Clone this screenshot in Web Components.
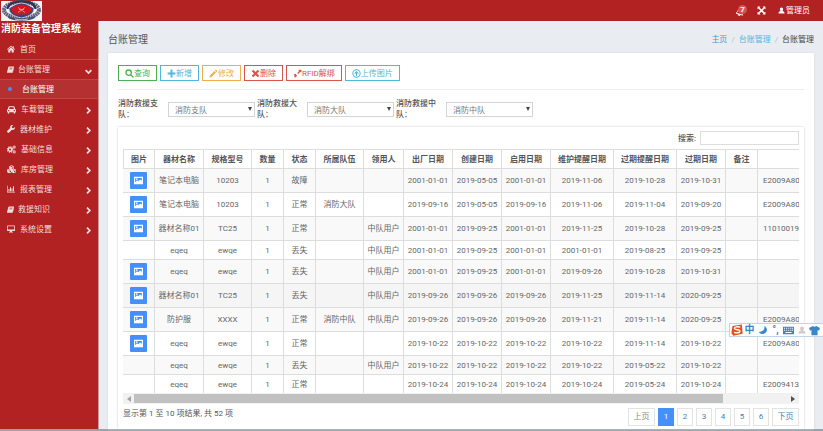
<!DOCTYPE html>
<html lang="zh-CN">
<head>
<meta charset="utf-8">
<meta name="viewport" content="width=device-width, initial-scale=1">
<title>消防装备管理系统</title>
<style>
  body {
    margin: 0;
    background: #e9edf2;
    color: #666;
    font: 8px/11px Roboto, "Noto Sans CJK SC", sans-serif;
  }
</style>
</head>
<body>
<equip-app>
  <top-bar slot="header" user="管理员" count="7"></top-bar>

  <side-nav slot="sidebar" heading="消防装备管理系统">
    <nav-item icon="home">首页</nav-item>
    <nav-item icon="book" arrow="down">台账管理</nav-item>
    <nav-item sub>台账管理</nav-item>
    <nav-item icon="car" arrow="right">车载管理</nav-item>
    <nav-item icon="wrench" arrow="right">器材维护</nav-item>
    <nav-item icon="cogs" arrow="right">基础信息</nav-item>
    <nav-item icon="cubes" arrow="right">库房管理</nav-item>
    <nav-item icon="chart" arrow="right">报表管理</nav-item>
    <nav-item icon="book" arrow="right">救援知识</nav-item>
    <nav-item icon="desktop" arrow="right">系统设置</nav-item>
  </side-nav>

  <page-title heading="台账管理"></page-title>

  <content-card>
    <tool-button slot="tools" icon="search" color="#4caf50">查询</tool-button>
    <tool-button slot="tools" icon="plus" color="#4fb8dc">新增</tool-button>
    <tool-button slot="tools" icon="pencil" color="#f0ad4e">修改</tool-button>
    <tool-button slot="tools" icon="times" color="#d9534f">删除</tool-button>
    <tool-button slot="tools" icon="unlink" color="#d9534f">RFID解绑</tool-button>
    <tool-button slot="tools" icon="upload" color="#4fb8dc">上传图片</tool-button>

    <filter-select slot="filters" label="消防救援支队：" value="消防支队"></filter-select>
    <filter-select slot="filters" label="消防救援大队：" value="消防大队"></filter-select>
    <filter-select slot="filters" label="消防救援中队：" value="消防中队"></filter-select>

    <data-panel>
      <search-box slot="search"></search-box>
      <equip-table></equip-table>
      <span slot="info">显示第 1 至 10 项结果, 共 52 项</span>
      <page-list slot="pages" total="6" current="1"></page-list>
    </data-panel>
  </content-card>
</equip-app>
<ime-bar></ime-bar>

<script>
(function () {
  'use strict';

  // inner markup of every icon, all on a 16 x 16 box
  const ICONS = {
    home: '<path d="M8 1.5 0 8.4l1 1.2L8 3.7l7 5.900 1-1.200-2.500-2.200V2.500h-2v2zM8 5 2.500 9.600V15H6.600v-4h2.800v4h4.100V9.600z"/>',
    book: '<path d="M5 1h10.2c.7 0 1 .6.8 1.2l-3 10.3c-.2.6-.6 1-1.3 1H2.600c-.7 0-.7.9 0 .9h10.200L15.500 5l.5.6-2.600 9.400c-.2.6-.7 1-1.300 1H2.300C.8 16-.2 14.600.2 13.200L3.200 2.500C3.500 1.600 4.100 1 5 1zm1.300 3-.3 1h6.500l.3-1zm-.8 2.500-.3 1h6.500l.3-1z" fill-rule="evenodd"/>',
    car: '<path fill-rule="evenodd" d="M4.200 2h7.600c.8 0 1.400.5 1.600 1.200L14.400 7c1 .2 1.600 1 1.600 2v4h-1.500v1.200a1.300 1.300 0 0 1-2.600 0V13H4.100v1.200a1.300 1.300 0 0 1-2.600 0V13H0V9c0-1 .6-1.800 1.600-2l1-3.800C2.800 2.500 3.400 2 4.200 2zm.3 1.800L3.700 7h8.600l-.8-3.200zM3 8.700a1.300 1.300 0 1 0 0 2.600 1.300 1.300 0 0 0 0-2.600zm10 0a1.300 1.300 0 1 0 0 2.600 1.300 1.300 0 0 0 0-2.600z"/>',
    wrench: '<path d="M15.600 4.200c.8 2.800-.8 5.200-3.400 5.600-.9.100-1.500 0-2.200-.2L4.300 15.200a2 2 0 0 1-2.900 0l-.6-.6a2 2 0 0 1 0-2.900L6.500 6C5.700 3.400 7.300.6 10 .2c.9-.1 1.700 0 2.400.3L9.600 3.200l.5 2.700 2.700.5z"/>',
    cogs: '<g fill="none" stroke="currentColor"><circle cx="5.500" cy="8" r="3.200" stroke-width="2.600"/><circle cx="5.500" cy="8" r="5" stroke-width="1.800" stroke-dasharray="2 1.930"/><circle cx="13" cy="3.800" r="1.600" stroke-width="1.600"/><circle cx="13" cy="12.200" r="1.600" stroke-width="1.600"/><circle cx="13" cy="3.800" r="2.700" stroke-width="1" stroke-dasharray="1.200 .920"/><circle cx="13" cy="12.200" r="2.700" stroke-width="1" stroke-dasharray="1.200 .920"/></g>',
    cubes: '<path fill-rule="evenodd" d="M8 .5 12 2v4.500l3.800 1.700v4.500L12 14.800l-4-2-4 2-3.800-2.100V8.200L4 6.500V2zm0 1.300L5.500 2.700 8 3.700l2.500-1zM8.600 7 11 5.800V4L8.600 5zM4 7.800 1.700 8.700 4 9.700l2.400-1zm8 0-2.400.9 2.400 1 2.300-1zM4.600 13.100 7 11.900V9.900l-2.400 1zm8 0 2.300-1.200v-2l-2.300 1z"/>',
    chart: '<path d="M0 1.500h1.300v12H16V15H0zM3 8h2v4.500H3zm3-3.500h2v8H6zM9 6.500h2v6H9zm3-4h2v10h-2z"/>',
    desktop: '<path fill-rule="evenodd" d="M1.200 1h13.600c.7 0 1.200.5 1.200 1.200v8.600c0 .7-.5 1.200-1.200 1.200H10l.6 2H12v1H4v-1h1.400l.6-2H1.200C.5 12 0 11.500 0 10.800V2.200C0 1.500.5 1 1.200 1zm.3 1.500V9h13V2.500z"/>',
    down: '<path d="m1.500 5 6.500 6.500L14.500 5" fill="none" stroke="currentColor" stroke-width="4"/>',
    right: '<path d="M4.500 1.500 11 8l-6.500 6.500" fill="none" stroke="currentColor" stroke-width="4"/>',
    bell: '<path transform="rotate(18 8 8)" d="M8 1c3.200.4 4.500 2.800 4.500 5.500 0 3 .9 4.600 2.500 6H1c1.600-1.400 2.500-3 2.500-6C3.500 3.800 4.800 1.400 8 1zM6 13.500h4a2 2 0 0 1-4 0z" fill="none" stroke="currentColor" stroke-width="1.600"/>',
    expand: '<path d="M1 1h5L4.500 2.500 8 6l3.500-3.500L10 1h5v5l-1.500-1.500L10 8l3.500 3.500L15 10v5h-5l1.500-1.500L8 10l-3.500 3.500L6 15H1v-5l1.500 1.500L6 8 2.500 4.500 1 6z"/>',
    user: '<path d="M8 1c2.200 0 3.700 1.700 3.700 4 0 1.700-.8 3.200-2 3.900C13 9.300 15 11 15 15H1c0-4 2-5.700 5.300-6.100-1.200-.7-2-2.200-2-3.900 0-2.300 1.500-4 3.700-4z"/>',
    search: '<path d="M6.500 1.700a4.800 4.800 0 1 0 0 9.600 4.800 4.800 0 0 0 0-9.600zM10 10l5 5" fill="none" stroke="currentColor" stroke-width="2.400"/>',
    plus: '<path d="M6.300 1h3.400v5.300H15v3.400H9.700V15H6.300V9.700H1V6.300h5.300z"/>',
    pencil: '<path d="m12.300 1 2.700 2.700-1.800 1.800-2.700-2.700zM9.600 3.700l2.700 2.700L4 14.700 1 15l.3-3z"/>',
    times: '<path d="M4 1.300 8 5.300l4-4L14.700 4l-4 4 4 4-2.700 2.700-4-4-4 4L1.300 12l4-4-4-4z"/>',
    unlink: '<path d="M8.500 2.500 11.500 1l4 1-1 4-1.300-1.300-4 4L7.500 7l4-4-1.500-.2zM1 10l3.500-1.500L7 11l-1.500 3.500L2 15l1-2.500z"/>',
    upload: '<circle cx="8" cy="8" r="6.500" fill="none" stroke="currentColor" stroke-width="1.800"/><path d="m8 3.500 4 4-1.200 1.200-1.900-1.800V12.500H7.100V6.900L5.200 8.700 4 7.500z"/>',
    image: '<path fill-rule="evenodd" d="M0 1.500h16v13H0zM2 3.500v7.500l3.500-3.400 2 1.700L11 6l3 2.500v-5zM5 4.200a1.400 1.400 0 1 1 0 2.800 1.400 1.400 0 0 1 0-2.800z"/>',
    moon: '<path d="M10 1.500c1.500 5-1.500 9-8.500 9.500 2.300 4.500 9.800 4.500 12.200-.5C15.300 7 13.700 3 10 1.500z"/>',
    keyboard: '<path fill-rule="evenodd" d="M0 2.500h16v11H0zM1.500 4v1.500H3V4zm3 0v1.500H6V4zm3 0v1.500H9V4zm3 0v1.500H12V4zm2.500 0v1.500h1.500V4zM1.500 7v1.500H3V7zm3 0v1.500H6V7zm3 0v1.500H9V7zm3 0v1.500H12V7zM13 7v1.500h1.500V7zM3.500 10.300v1.500h9v-1.500z"/>',
    shirt: '<path d="M5.500 1.500c1.300 1.500 3.700 1.500 5 0L16 4.200l-1.500 4-2-.8V15h-9V7.400l-2 .8-1.500-4z"/>'
  };

  const icon = (name, size) =>
    `<svg viewBox="0 0 16 16" width="${size}" height="${size}" fill="currentColor" aria-hidden="true">${ICONS[name]}</svg>`;

  class BaseElement extends HTMLElement {
    constructor() {
      super();
      this.attachShadow({mode: 'open'});
    }

    connectedCallback() {
      this.shadowRoot.innerHTML = this.template;
    }
  }

  customElements.define('equip-app', class extends BaseElement {
    get template() {
      return `
    <style>
      :host {
        display: grid;
        grid-template: auto 1fr / 99px minmax(0, 1fr);
        min-height: 100vh;
        box-sizing: border-box;
        border-bottom: 2px solid #9aa3ac;
      }
      header { grid-column: 1 / -1; }
      aside { display: grid; }
      main {
        display: flex;
        flex-direction: column;
        padding: 0 9px;
      }
    </style>
    <header><slot name="header"></slot></header>
    <aside><slot name="sidebar"></slot></aside>
    <main><slot></slot></main>
    `;
    }
  });

  customElements.define('top-bar', class extends BaseElement {
    get template() {
      return `
    <style>
      :host {
        display: flex;
        align-items: center;
        justify-content: space-between;
        height: 21px;
        background: #b22222;
        color: #fff;
      }
      svg { display: block; }
      .tools {
        display: flex;
        align-items: center;
        gap: 12px;
        padding-right: 13px;
      }
      a {
        display: flex;
        align-items: center;
        gap: 1px;
        color: inherit;
        text-decoration: none;
      }
      .bell {
        position: relative;
        padding: 2px 2px 0 0;
        margin-right: -1px;
      }
      .badge {
        position: absolute;
        top: -1px;
        left: 2px;
        width: 9px;
        height: 9px;
        border-radius: 5px;
        background: #d9534f;
        font: bold 8px/9px Roboto, sans-serif;
        text-align: center;
      }
    </style>
    <svg width="43" height="21" viewBox="0 0 43 21" role="img" aria-label="徽标">
      <rect x="1" y="1" width="41" height="20" fill="#f4f4f6"/>
      <ellipse cx="21.500" cy="10" rx="17.500" ry="8" fill="none" stroke="#5c6178" stroke-width="4" stroke-dasharray="1.800 .500"/>
      <path d="M8 9C8 3 15 1.500 21.500 1.500S35 3 35 9" fill="none" stroke="#2d3455" stroke-width="2.400"/>
      <path d="M9 8c3-1 7-5 12.500-5S31 7 34 8c0 5-3 8-12.500 10C12 16 9 13 9 8z" fill="#34447c" stroke="#d8dbe6" stroke-width=".8"/>
      <path d="M11 8c3-1 5-3.500 10.500-3.500S29 7 32 8c0 3-2 5-4 6.500H15C13 13 11 11 11 8z" fill="#d3161f"/>
      <path d="m18 7.500 7 5m0-5-7 5m1-3h5" stroke="#f3a19b" stroke-width=".8"/>
      <path d="M7 15.500c8 3.500 21 3.500 29 0l-2 3c-7 3-18 3-25 0z" fill="#4a5069"/>
      <path d="M15 19c4 1 9 1 13 0" stroke="#c3c6d0" fill="none"/>
    </svg>
    <div class="tools">
      <a class="bell" href="#" title="消息">${icon('bell', 8)}<span class="badge">${this.getAttribute('count')}</span></a>
      <a href="#" title="全屏">${icon('expand', 9)}</a>
      <a href="#">${icon('user', 7)}${this.getAttribute('user')}</a>
    </div>
    `;
    }
  });

  customElements.define('side-nav', class extends BaseElement {
    get template() {
      return `
    <style>
      :host {
        display: block;
        box-sizing: border-box;
        border-right: 1px solid #cf9a9e;
        background: #b22222;
        box-shadow: inset 0 1px #9c2b2b;
        color: #fff;
      }
      h1 {
        margin: 0;
        padding: 0 0 3px 1px;
        font-size: 10px;
        line-height: 15px;
        white-space: nowrap;
      }
    </style>
    <h1>${this.getAttribute('heading')}</h1>
    <nav><slot></slot></nav>
    `;
    }
  });

  // width of each menu icon; the text starts right after it
  const NAV_ICON_WIDTH = {home: 8, book: 7, car: 9, wrench: 8, cogs: 9, cubes: 9, chart: 8, desktop: 8};

  customElements.define('nav-item', class extends BaseElement {
    get template() {
      const name = this.getAttribute('icon');
      const arrow = this.getAttribute('arrow');
      return `
    <style>
      :host { display: block; }
      a {
        display: flex;
        align-items: center;
        gap: 5px;
        height: 20px;
        padding: 0 6px 0 7px;
        box-sizing: border-box;
        color: #f3dede;
        text-decoration: none;
      }
      :host([icon=book]) a { gap: 4px; }
      :host([arrow=down]) a { border-top: 1px solid #c04a4a; }
      :host([sub]) a {
        gap: 10px;
        border: solid #bd4545;
        border-width: 1px 0;
        background: #b53030;
        color: #fff;
      }
      .text { flex: 1; }
      .dot {
        width: 4px;
        height: 4px;
        margin-left: 1px;
        border-radius: 2px;
        background: #4390fb;
      }
      .arrow { padding-top: 3px; }
      svg { display: block; }
    </style>
    <a href="#">
      ${name ? icon(name, NAV_ICON_WIDTH[name]) : '<span class="dot"></span>'}
      <span class="text"><slot></slot></span>
      ${arrow ? `<span class="arrow">${icon(arrow, 7)}</span>` : ''}
    </a>
    `;
    }
  });

  customElements.define('page-title', class extends BaseElement {
    get template() {
      const heading = this.getAttribute('heading');
      return `
    <style>
      :host {
        display: flex;
        align-items: center;
        justify-content: space-between;
        padding: 11px 0 6px;
      }
      h2 {
        margin: 0;
        color: #555;
        font-size: 10px;
        font-weight: normal;
        line-height: 15px;
      }
      nav { display: flex; gap: 4px; }
      i { color: #bbb; font-style: normal; }
      a { color: #4fb8dc; text-decoration: none; }
      a:first-child { color: #3c9be0; }
      b { color: #444; font-weight: normal; }
    </style>
    <h2>${heading}</h2>
    <nav><a href="#">主页</a><i>/</i><a href="#">${heading}</a><i>/</i><b>${heading}</b></nav>
    `;
    }
  });

  customElements.define('content-card', class extends BaseElement {
    get template() {
      return `
    <style>
      :host {
        flex: 1;
        display: flex;
        flex-direction: column;
        padding: 12px 10px 0;
        background: #fff;
        box-shadow: 0 0 2px #cfd5dc;
      }
      .tools {
        display: flex;
        flex-wrap: wrap;
        gap: 3px;
        padding-bottom: 8px;
        border-bottom: 1px solid #eee;
      }
      .filters {
        display: flex;
        flex-wrap: wrap;
        gap: 2px;
        padding: 8px 0 7px;
      }
    </style>
    <div class="tools"><slot name="tools"></slot></div>
    <div class="filters"><slot name="filters"></slot></div>
    <slot></slot>
    `;
    }
  });

  customElements.define('tool-button', class extends BaseElement {
    get template() {
      return `
    <style>
      :host { display: block; }
      button {
        display: flex;
        align-items: center;
        height: 16px;
        padding: 0 6px;
        border: 1px solid;
        background: #fff;
        color: ${this.getAttribute('color')};
        font: inherit;
        cursor: pointer;
      }
    </style>
    <button type="button">${icon(this.getAttribute('icon'), 9)}<slot></slot></button>
    `;
    }
  });

  customElements.define('filter-select', class extends BaseElement {
    get template() {
      return `
    <style>
      :host {
        display: flex;
        align-items: center;
        gap: 8px;
      }
      label {
        width: 42px;
        color: #555;
        font-weight: 500;
      }
      .box { position: relative; }
      select {
        display: block;
        width: 87px;
        height: 15px;
        padding: 2px 14px 0 6px;
        box-sizing: border-box;
        appearance: none;
        border: 1px solid #d4d4d4;
        border-radius: 0;
        background: #fff;
        color: #777;
        font: inherit;
      }
      .caret {
        position: absolute;
        top: 5px;
        right: 3px;
        border: solid transparent;
        border-width: 4px 2px 0;
        border-top-color: #444;
        pointer-events: none;
      }
    </style>
    <label for="team">${this.getAttribute('label')}</label>
    <div class="box">
      <select id="team"><option>${this.getAttribute('value')}</option></select>
      <span class="caret"></span>
    </div>
    `;
    }
  });

  customElements.define('search-box', class extends BaseElement {
    get template() {
      return `
    <style>
      :host {
        display: flex;
        align-items: center;
        justify-content: flex-end;
        gap: 4px;
      }
      label { color: #555; font-weight: 500; }
      input {
        width: 99px;
        height: 14px;
        padding: 0 4px;
        box-sizing: border-box;
        border: 1px solid #ddd;
        font: inherit;
      }
    </style>
    <label for="q">搜索:</label>
    <input id="q" type="search">
    `;
    }
  });

  customElements.define('data-panel', class extends BaseElement {
    get template() {
      return `
    <style>
      :host {
        flex: 1;
        display: flex;
        flex-direction: column;
        padding: 4px 5px 2px;
        box-shadow: 0 0 2px #c8c8c8;
        clip-path: inset(-2px -2px 0);
      }
      .search { margin-bottom: 4px; }
      .footer {
        display: flex;
        justify-content: space-between;
        padding-top: 4px;
        color: #555;
      }
    </style>
    <div class="search"><slot name="search"></slot></div>
    <slot></slot>
    <div class="footer"><slot name="info"></slot><slot name="pages"></slot></div>
    `;
    }
  });

  const COLUMNS = [
    ['图片', 32], ['器材名称', 49], ['规格型号', 48], ['数量', 32], ['状态', 32],
    ['所属队伍', 48], ['领用人', 40], ['出厂日期', 49], ['创建日期', 49], ['启用日期', 49],
    ['维护提醒日期', 63], ['过期提醒日期', 63], ['过期日期', 49], ['备注', 32], ['', 116]
  ];

  // first field: whether the record has a picture
  const ROWS = [
    [1, '笔记本电脑', '10203', '1', '故障', '', '', '2001-01-01', '2019-05-05', '2001-01-01', '2019-11-06', '2019-10-28', '2019-10-31', '', 'E2009A80'],
    [1, '笔记本电脑', '10203', '1', '正常', '消防大队', '', '2019-09-16', '2019-05-05', '2019-09-16', '2019-11-06', '2019-11-04', '2019-09-20', '', 'E2009A80'],
    [1, '器材名称01', 'TC25', '1', '正常', '', '中队用户', '2001-01-01', '2019-09-25', '2001-01-01', '2019-11-25', '2019-10-28', '2019-09-25', '', '11010019'],
    [0, 'eqeq', 'ewqe', '1', '丢失', '', '中队用户', '2001-01-01', '2019-09-25', '2001-01-01', '2001-01-01', '2019-08-25', '2019-09-25', '', ''],
    [1, 'eqeq', 'ewqe', '1', '丢失', '', '中队用户', '2001-01-01', '2019-09-25', '2001-01-01', '2019-09-26', '2019-10-28', '2019-10-31', '', ''],
    [1, '器材名称01', 'TC25', '1', '丢失', '', '中队用户', '2019-09-26', '2019-09-26', '2019-09-26', '2019-11-25', '2019-11-14', '2020-09-25', '', ''],
    [1, '防护服', 'XXXX', '1', '正常', '消防中队', '中队用户', '2019-09-26', '2019-09-26', '2019-09-26', '2019-11-21', '2019-11-14', '2020-09-25', '', 'E2009A80'],
    [1, 'eqeq', 'ewqe', '1', '正常', '', '', '2019-10-22', '2019-10-22', '2019-10-22', '2019-10-22', '2019-11-14', '2019-10-22', '', 'E2009A80'],
    [0, 'eqeq', 'ewqe', '1', '丢失', '', '中队用户', '2019-10-22', '2019-10-22', '2019-10-22', '2019-10-22', '2019-05-22', '2019-10-22', '', ''],
    [0, 'eqeq', 'ewqe', '1', '正常', '', '', '2019-10-24', '2019-10-24', '2019-10-24', '2019-10-24', '2019-05-24', '2019-10-24', '', 'E2009413']
  ];
  const ACTIVE_ROW = 5;

  customElements.define('equip-table', class extends BaseElement {
    row(fields, index) {
      const [picture, ...rest] = fields;
      const button = picture ? `<button type="button" title="查看图片">${icon('image', 9)}</button>` : '';
      return `<tr class="${index === ACTIVE_ROW ? 'active' : ''}"><td>${button}</td>${rest.map(f => `<td>${f}</td>`).join('')}</tr>`;
    }

    get template() {
      const width = COLUMNS.reduce((sum, c) => sum + c[1], 0);
      return `
    <style>
      :host { display: block; }
      .scroller {
        overflow-x: auto;
        scrollbar-width: none;
      }
      table {
        width: ${width}px;
        table-layout: fixed;
        border-collapse: separate;
        border-spacing: 0;
      }
      th, td {
        box-sizing: border-box;
        height: 19px;
        padding: 0;
        border: solid #ddd;
        border-width: 0 1px 1px 0;
        text-align: center;
        white-space: nowrap;
      }
      th {
        height: 20px;
        border-top-width: 1px;
        color: #555;
        font-weight: bold;
      }
      th:first-child { border-left-width: 1px; }
      td:last-child { padding-left: 5px; text-align: left; }
      tr:nth-child(odd) td { background: #f9f9f9; }
      tr.active td { background: #f5f5f5; }
      tr:last-child td { height: 18px; border-bottom: 0; }
      button {
        display: grid;
        place-items: center;
        width: 17px;
        height: 17px;
        margin: 3px auto;
        padding: 0;
        border: 0;
        border-radius: 1px;
        background: #4390fb;
        color: #fff;
      }
      .bar {
        display: flex;
        align-items: center;
        gap: 3px;
        height: 11px;
        padding: 0 4px;
        background: #f1f1f1;
      }
      .bar::before, .bar::after {
        content: "";
        border: solid transparent;
        border-width: 3px 4px 3px 0;
        border-right-color: #a3a3a3;
      }
      .bar::after {
        border-width: 3px 0 3px 4px;
        border-left-color: #505050;
      }
      .track { flex: 1; }
      .thumb {
        width: 90%;
        height: 9px;
        background: #c1c1c1;
      }
    </style>
    <div class="scroller">
      <table>
        <colgroup>${COLUMNS.map(c => `<col style="width: ${c[1]}px">`).join('')}</colgroup>
        <thead><tr>${COLUMNS.map(c => `<th>${c[0]}</th>`).join('')}</tr></thead>
        <tbody>${ROWS.map(this.row).join('')}</tbody>
      </table>
    </div>
    <div class="bar"><div class="track"><div class="thumb"></div></div></div>
    `;
    }
  });

  customElements.define('page-list', class extends BaseElement {
    get template() {
      const current = Number(this.getAttribute('current'));
      const pages = Array.from({length: Number(this.getAttribute('total'))}, (_, i) => i + 1);
      return `
    <style>
      :host {
        display: flex;
        gap: 3px;
      }
      a {
        width: 16px;
        height: 18px;
        box-sizing: border-box;
        border: 1px solid #e3e3e3;
        background: #fff;
        color: #3f7fb8;
        line-height: 16px;
        text-align: center;
        text-decoration: none;
      }
      a.step { width: 27px; }
      a.off { color: #888; }
      a.current {
        border-color: #4390fb;
        background: #4390fb;
        color: #fff;
      }
    </style>
    <a class="step off" href="#">上页</a>
    ${pages.map(p => `<a href="#"${p === current ? ' class="current"' : ''}>${p}</a>`).join('')}
    <a class="step" href="#">下页</a>
    `;
    }
  });

  // floating input method bar, docked to the right edge
  customElements.define('ime-bar', class extends BaseElement {
    get template() {
      return `
    <style>
      :host {
        position: fixed;
        top: 323px;
        right: 0;
        display: grid;
        grid-template-columns: repeat(7, 13px);
        place-items: center;
        height: 14px;
        padding-right: 2px;
        box-sizing: border-box;
        border: 1px solid #bcd6ea;
        border-right: 0;
        background: #fdfeff;
        color: #3a86cc;
        font-size: 10px;
        font-weight: bold;
        line-height: 12px;
      }
      svg { display: block; }
      .mute { color: #ccc; }
    </style>
    <svg viewBox="0 0 16 16" width="12" height="12" aria-hidden="true">
      <path d="M2 2.500 14.500.500 15.500 13 3 15.500.500 12z" fill="#e2501c"/>
      <path d="M12.500 4.300C9 3 4.500 3.600 4.500 5.800c0 2.600 7.500 1.200 7.500 3.800 0 2.300-4.500 2.800-8 1.600" fill="none" stroke="#fff" stroke-width="1.800"/>
    </svg>
    <span>中</span>
    ${icon('moon', 10)}
    <span>°,</span>
    ${icon('keyboard', 11)}
    <span class="mute">${icon('user', 8)}</span>
    ${icon('shirt', 11)}
    `;
    }
  });

}());
</script>
</body>
</html>
